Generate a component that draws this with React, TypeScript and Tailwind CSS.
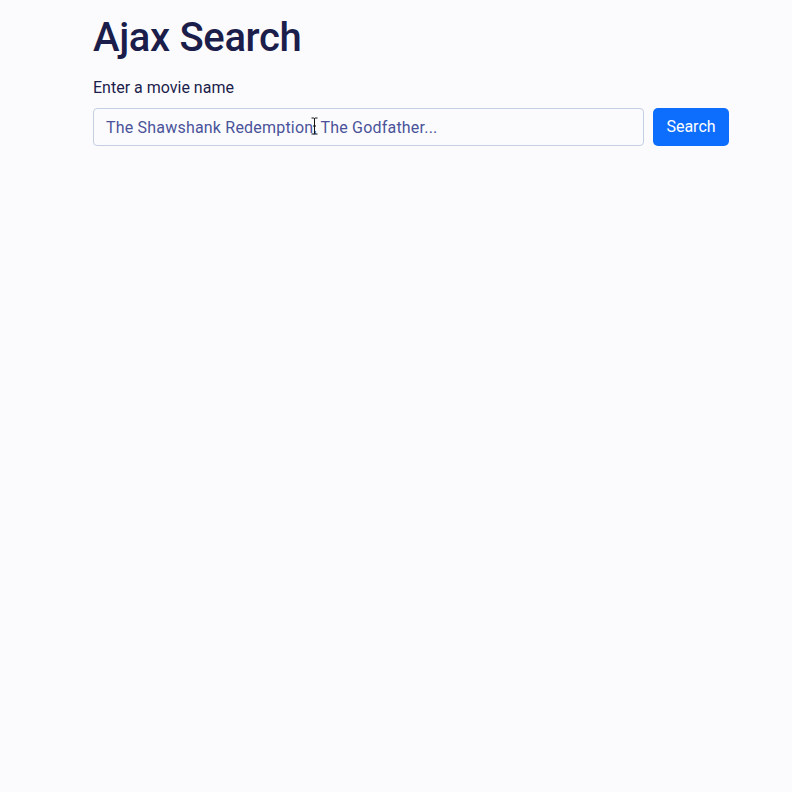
import React from "react";

export default function App() {
  return (
    <div
      className="min-h-[792px] w-full bg-[#fbfbfe] text-[#1b1d4a]"
      style={{ fontFamily: "Roboto, 'Liberation Sans', sans-serif" }}
    >
      <div className="ml-[93px] w-[636px] pt-[14px]">
        <h1 className="text-[40px] leading-[48px] font-medium tracking-[-0.35px] mb-[16px]">Ajax Search</h1>
        <label className="block text-[16px] leading-[20px] mb-[10px]">Enter a movie name</label>
        <div className="flex gap-[9px]">
          <div className="relative flex-1">
            <input
              className="w-full h-[38px] rounded-[4px] border border-[#c5cfe2] bg-[#fbfbfe] px-[12px] text-[16px] tracking-[0.2px] placeholder:text-[#4a5399] outline-none"
              placeholder="The Shawshank Redemption, The Godfather..."
            />
            <svg className="absolute left-[218px] top-[9px]" width="7" height="18" viewBox="0 0 7 18">
              <path d="M0.5 1 H2.5 Q3.5 1 3.5 2 Q3.5 1 4.5 1 H6.5 M3.5 2 V16 M0.5 17 H2.5 Q3.5 17 3.5 16 Q3.5 17 4.5 17 H6.5 M2 9 H5" stroke="#111" strokeWidth="1" fill="none" />
            </svg>
          </div>
          <button className="h-[38px] w-[76px] rounded-[5px] bg-[#0d6efd] text-white text-[16px]">Search</button>
        </div>
      </div>
    </div>
  );
}
